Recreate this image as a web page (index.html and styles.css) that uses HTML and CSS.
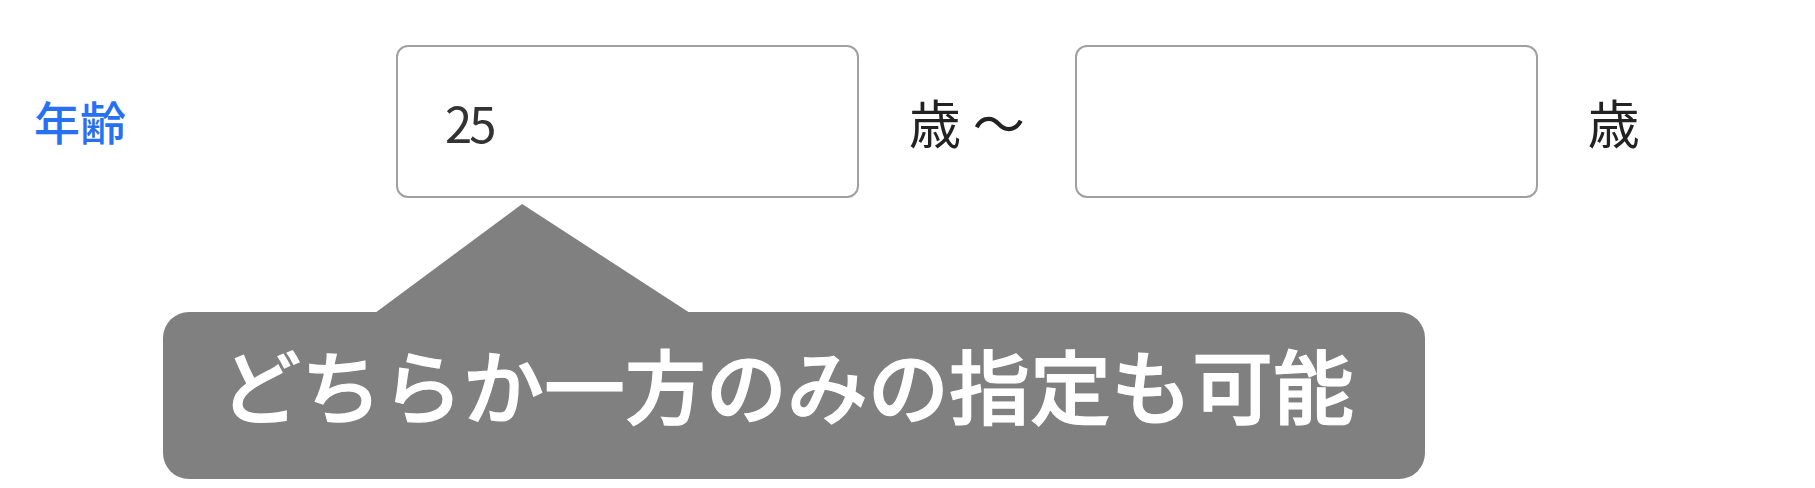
FILE: index.html
```html
<!DOCTYPE html>
<html lang="ja">
<head>
<meta charset="utf-8">
<title>年齢</title>
<link rel="stylesheet" href="styles.css">
</head>
<body>
  <div class="field-row">
    <label class="field-label" for="age-min">年齢</label>
    <div class="range">
      <input class="num-input" id="age-min" type="text" value="25">
      <span class="unit">歳 〜</span>
      <input class="num-input" id="age-max" type="text" value="">
      <span class="unit">歳</span>
    </div>
  </div>
  <p class="hint-bubble">どちらか一方のみの指定も可能</p>
</body>
</html>
```
FILE: styles.css
```css
html, body {
  margin: 0;
  padding: 0;
  background: #ffffff;
}

body {
  font-family: "Noto Sans CJK JP", "Noto Sans", sans-serif;
  color: #222222;
}

.field-row {
  display: flex;
  align-items: center;
  padding: 45px 0 0 34px;
}

.field-label {
  width: 362px;
  flex: none;
  margin-bottom: 4px;
  font-size: 46px;
  font-weight: 500;
  line-height: 1;
  color: #2870f2;
}

.range {
  display: flex;
  align-items: center;
  gap: 50px;
}

.num-input {
  display: block;
  box-sizing: border-box;
  width: 463px;
  height: 153px;
  margin: 0;
  padding: 0 0 0 47px;
  border: 2px solid #a0a0a0;
  border-radius: 12px;
  background: #ffffff;
  font-family: "Noto Sans CJK JP", sans-serif;
  font-size: 49px;
  letter-spacing: -3px;
  color: #333333;
  outline: none;
}

.unit {
  font-size: 52px;
  line-height: 1;
  color: #222222;
  white-space: nowrap;
}

/* speech bubble pointing up at the first field */
.hint-bubble {
  position: relative;
  box-sizing: border-box;
  width: 1262px;
  height: 167px;
  margin: 114px 0 0 163px;
  padding: 30px 0 0 57px;
  border-radius: 26px;
  background: #808080;
  color: #ffffff;
  font-size: 81px;
  font-weight: 500;
  line-height: 1;
  white-space: nowrap;
  -webkit-text-stroke: 1.2px #ffffff;
}

.hint-bubble::before {
  content: "";
  position: absolute;
  left: 212px;
  top: -108px;
  width: 315px;
  height: 109px;
  background: #808080;
  clip-path: polygon(46.7% 0, 100% 100%, 0 100%);
}
```
